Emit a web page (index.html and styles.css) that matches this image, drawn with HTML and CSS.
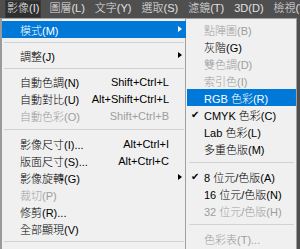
FILE: index.html
```html
<!DOCTYPE html>
<html lang="zh-Hant">
  <head>
    <meta charset="UTF-8" />
    <title>影像 選單</title>
    <link rel="stylesheet" href="styles.css">
  </head>
  <body>
    <div id="menubar">
      <span class="menubar-item active">影像(I)</span>
      <span class="menubar-item">圖層(L)</span>
      <span class="menubar-item">文字(Y)</span>
      <span class="menubar-item">選取(S)</span>
      <span class="menubar-item">濾鏡(T)</span>
      <span class="menubar-item">3D(D)</span>
      <span class="menubar-item">檢視(V)</span>
    </div>
    <div id="menus">
      <div class="menu main-menu">
        <div class="menu-item selected"><span class="label">模式(M)</span><span class="arrow"></span></div>
        <div class="menu-sep"></div>
        <div class="menu-item"><span class="label">調整(J)</span><span class="arrow"></span></div>
        <div class="menu-sep"></div>
        <div class="menu-item"><span class="label">自動色調(N)</span><span class="shortcut">Shift+Ctrl+L</span></div>
        <div class="menu-item"><span class="label">自動對比(U)</span><span class="shortcut">Alt+Shift+Ctrl+L</span></div>
        <div class="menu-item disabled"><span class="label">自動色彩(O)</span><span class="shortcut">Shift+Ctrl+B</span></div>
        <div class="menu-sep wide"></div>
        <div class="menu-item"><span class="label">影像尺寸(I)...</span><span class="shortcut">Alt+Ctrl+I</span></div>
        <div class="menu-item"><span class="label">版面尺寸(S)...</span><span class="shortcut">Alt+Ctrl+C</span></div>
        <div class="menu-item"><span class="label">影像旋轉(G)</span><span class="arrow"></span></div>
        <div class="menu-item disabled"><span class="label">裁切(P)</span></div>
        <div class="menu-item"><span class="label">修剪(R)...</span></div>
        <div class="menu-item"><span class="label">全部顯現(V)</span></div>
        <div class="menu-sep"></div>
      </div>
      <div class="menu sub-menu">
        <div class="menu-item disabled"><span class="label">點陣圖(B)</span></div>
        <div class="menu-item"><span class="label">灰階(G)</span></div>
        <div class="menu-item disabled"><span class="label">雙色調(D)</span></div>
        <div class="menu-item disabled"><span class="label">索引色(I)</span></div>
        <div class="menu-item selected"><span class="label">RGB 色彩(R)</span></div>
        <div class="menu-item checked"><span class="label">CMYK 色彩(C)</span></div>
        <div class="menu-item"><span class="label">Lab 色彩(L)</span></div>
        <div class="menu-item"><span class="label">多重色版(M)</span></div>
        <div class="menu-sep wide"></div>
        <div class="menu-item checked"><span class="label">8 位元/色版(A)</span></div>
        <div class="menu-item"><span class="label">16 位元/色版(N)</span></div>
        <div class="menu-item disabled"><span class="label">32 位元/色版(H)</span></div>
        <div class="menu-sep wide"></div>
        <div class="menu-item disabled"><span class="label">色彩表(T)...</span></div>
      </div>
    </div>
  </body>
</html>
```

FILE: styles.css
```css
body {
  margin: 0;
  width: 300px;
  height: 249px;
  overflow: hidden;
  background-color: #4f4f4f;
  font-family: "Liberation Sans", "Noto Sans CJK TC", sans-serif;
  font-size: 11px;
  font-weight: 300;
}

#menubar {
  display: flex;
  height: 18px;
  padding-left: 5px;
  gap: 6px;
  align-items: stretch;
}

.menubar-item {
  flex-shrink: 0;
  color: #e2e2e2;
  padding: 0 2px;
  line-height: 17px;
  white-space: nowrap;
}

.menubar-item.active {
  background-color: #2f2f2f;
  box-shadow: inset 0 0 0 1px #3a3a3a;
}

#menus {
  display: flex;
  align-items: flex-start;
}

.menu {
  background-color: #f0f0f0;
  box-sizing: border-box;
  padding-top: 2px;
}

.main-menu {
  width: 186px;
  height: 231px;
  border-left: 2px solid #9a9a9a;
  border-top: 1px solid #a8a8a8;
}

.sub-menu {
  width: 112px;
  height: 231px;
  border: 1px solid #a0a0a0;
  border-bottom: none;
  margin-left: -1px;
  padding-left: 1px;
}

.menu-item {
  position: relative;
  display: flex;
  align-items: center;
  height: 17px;
  color: #000;
  white-space: nowrap;
}

.main-menu .menu-item {
  padding-left: 18px;
  padding-right: 17px;
}

.sub-menu .menu-item {
  padding-left: 17px;
}

.menu-item .label {
  flex: 1;
}

.menu-item.disabled {
  color: #9d9d9d;
}

.menu-item.selected {
  background-color: #0078d7;
  color: #fff;
}

.shortcut {
  text-align: right;
}

.arrow {
  position: absolute;
  right: 4px;
  top: 5px;
  width: 0;
  height: 0;
  border-top: 3.5px solid transparent;
  border-bottom: 3.5px solid transparent;
  border-left: 4px solid #000;
}

.selected .arrow {
  border-left-color: #fff;
}

.checked::before {
  content: "✔";
  position: absolute;
  left: 4px;
  top: 0;
  font-family: "DejaVu Sans", sans-serif;
  font-size: 10px;
  line-height: 17px;
  color: #000;
}

.menu-sep {
  height: 9px;
  display: flex;
  align-items: center;
  margin: 0 2px;
}

.menu-sep::after {
  content: "";
  flex: 1;
  border-top: 1px solid #d2d2d2;
}

.menu-sep.wide {
  height: 11px;
}
```
